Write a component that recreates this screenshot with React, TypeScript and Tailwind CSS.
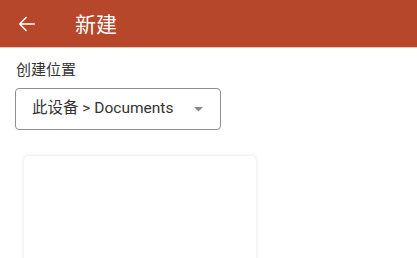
import React from "react";

export default function App() {
  return (
    <div className="w-[417px] h-[258px] overflow-hidden bg-white" style={{ fontFamily: '"Noto Sans", "Noto Sans CJK SC", sans-serif' }}>
      <div className="h-[48px] bg-[#b7472a] flex items-center border-b border-[#e8c4b8]">
        <svg width="22" height="22" viewBox="0 0 24 24" className="ml-[16px]" fill="none" stroke="white" strokeWidth="1.6" strokeLinecap="round" strokeLinejoin="round">
          <path d="M20 12H4M11 5l-7 7 7 7" />
        </svg>
        <span className="ml-[37px] text-[21px] text-white leading-none" style={{ fontFamily: '"Noto Sans CJK SC", sans-serif' }}>新建</span>
      </div>
      <div className="px-[15px] pt-[11px]">
        <div className="text-[15px] text-[#333] leading-[20px] pl-[1px]" style={{ fontFamily: '"Noto Sans CJK SC", sans-serif' }}>创建位置</div>
        <div className="mt-[9px] w-[206px] h-[42px] border border-[#8f8f8f] rounded-[4px] flex items-center pl-[16px] pr-[17px]">
          <span className="text-[15.5px] text-[#333] flex-1" style={{ fontFamily: 'Roboto, "Noto Sans CJK SC", sans-serif' }}>此设备 &gt; Documents</span>
          <svg width="9" height="5" viewBox="0 0 9 5">
            <path d="M0 0h9L4.5 4.5z" fill="#8a8a8a" />
          </svg>
        </div>
        <div className="mt-[26px] ml-[9px] w-[232px] h-[120px] bg-white rounded-[5px] shadow-[0_0_4px_rgba(0,0,0,0.12)]" />
      </div>
    </div>
  );
}
